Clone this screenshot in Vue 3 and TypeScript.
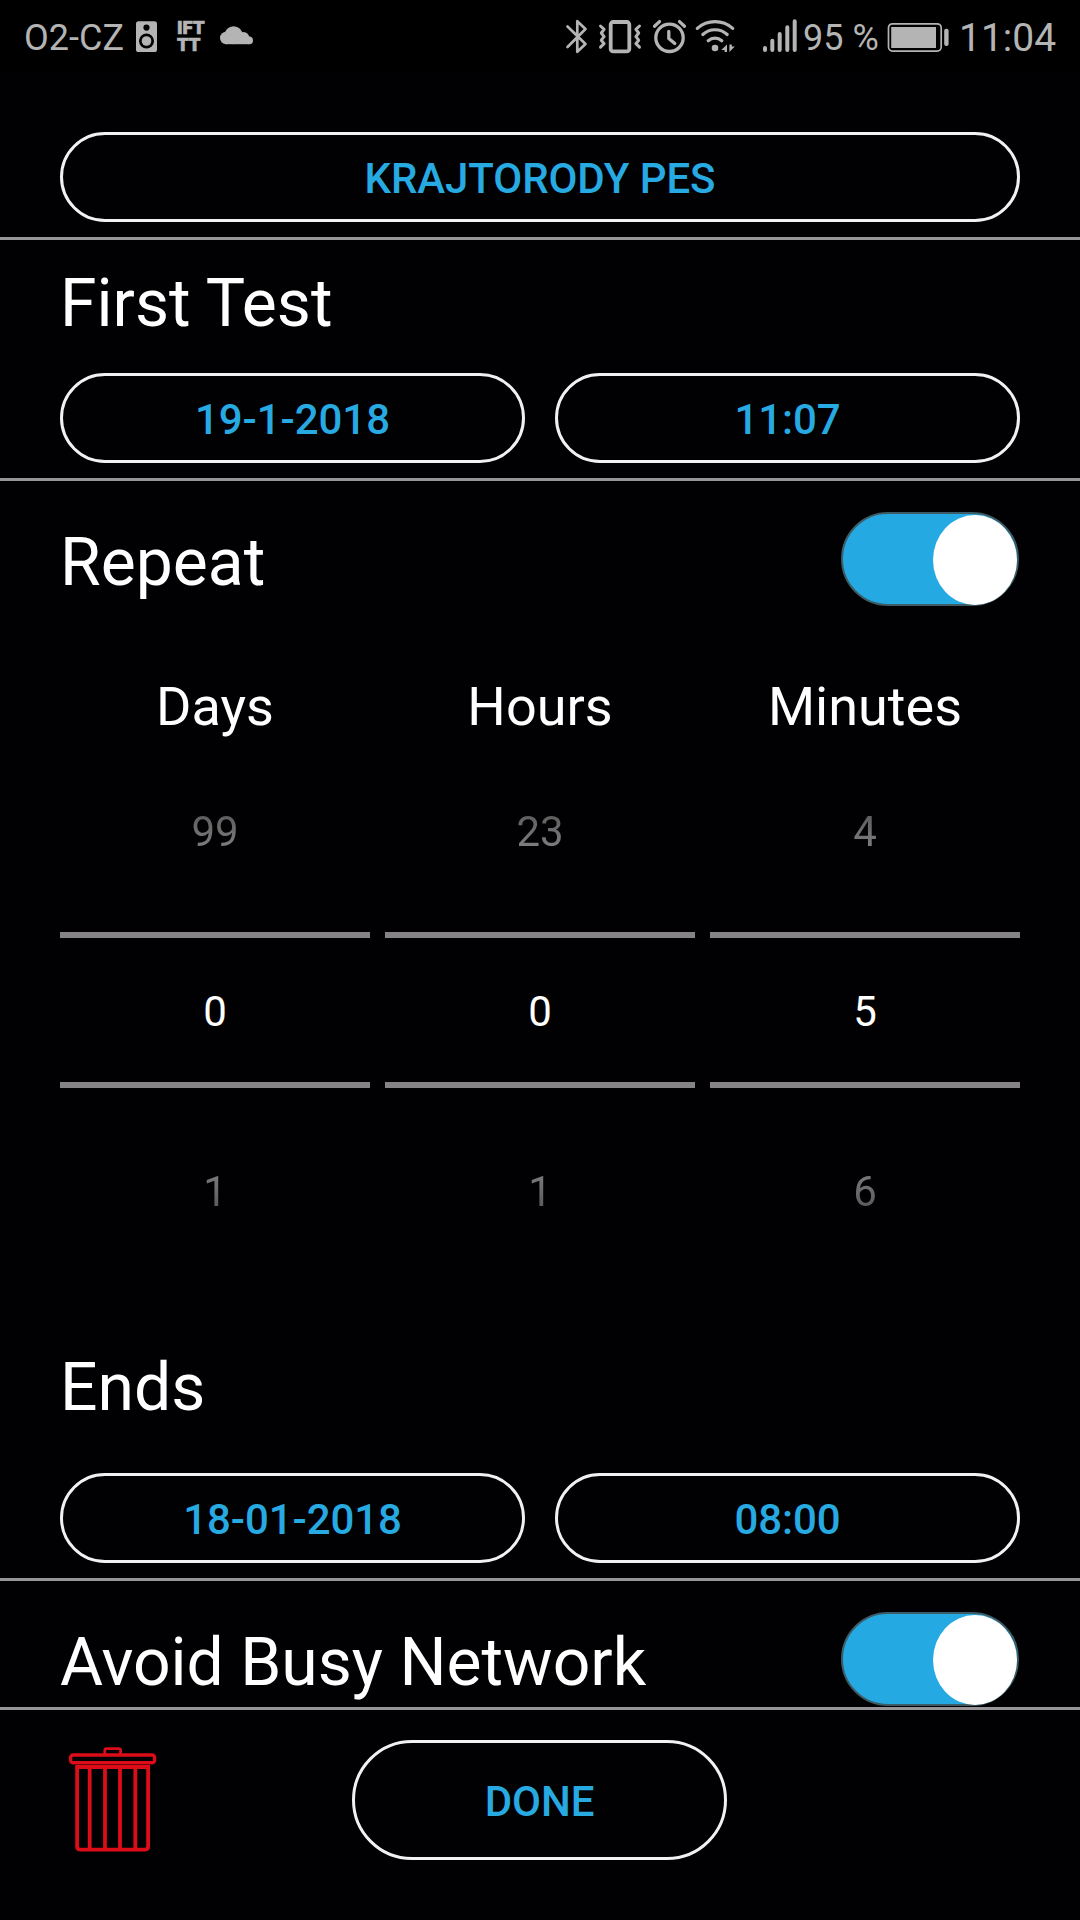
<script setup lang="ts">
interface Wheel {
  label: string
  prev: string
  current: string
  next: string
}

const testName = 'KRAJTORODY PES'
const start = { date: '19-1-2018', time: '11:07' }
const end = { date: '18-01-2018', time: '08:00' }
const iftttBadge = 'IFT\nTT'

const wheels: Wheel[] = [
  { label: 'Days', prev: '99', current: '0', next: '1' },
  { label: 'Hours', prev: '23', current: '0', next: '1' },
  { label: 'Minutes', prev: '4', current: '5', next: '6' },
]
</script>

<template>
  <div class="screen">
    <header class="status">
      <div class="status-left">
        <span class="carrier">O2-CZ</span>
        <svg viewBox="134 0 26 72" width="26" height="72">
          <rect x="136" y="21.3" width="21" height="30.7" rx="2.6" fill="#b4b4b4" />
          <circle cx="146.5" cy="27.6" r="3.1" fill="#000" />
          <circle cx="146.5" cy="41" r="7.5" fill="#000" />
          <circle cx="146.5" cy="41" r="4.8" fill="#b4b4b4" />
        </svg>
        <span class="ifttt">{{ iftttBadge }}</span>
        <svg viewBox="218 0 38 72" width="38" height="72">
          <g fill="#b4b4b4">
            <circle cx="226.2" cy="38" r="6.2" />
            <circle cx="233.6" cy="35.2" r="9" />
            <circle cx="243.4" cy="38" r="6" />
            <circle cx="249.2" cy="40.400" r="3.8" />
            <rect x="226" y="36" width="23.200" height="8.200" />
          </g>
        </svg>
      </div>
      <div class="status-right">
        <svg viewBox="560 0 32 72" width="32" height="72" class="line">
          <path d="M567.5 26.5 585.5 44 577.3 51.8V21.2L585.5 29 567.5 47" stroke-width="2.7" />
        </svg>
        <svg viewBox="592 0 56 72" width="56" height="72" class="line">
          <rect x="610.7" y="22" width="18.6" height="29.4" rx="2.5" stroke-width="3.8" />
          <path
            d="M600.5 26l3.6 3.4-2.8 3.6 2.8 3.6-2.8 3.6 2.8 3.5-3.6 3.5M639.5 26l-3.6 3.4 2.8 3.6-2.8 3.6 2.8 3.6-2.8 3.5 3.6 3.5"
            stroke-width="3"
          />
        </svg>
        <svg viewBox="648 0 42 72" width="42" height="72" class="line">
          <circle cx="669.5" cy="37.8" r="13.7" stroke-width="3.3" />
          <path d="M668.8 31.5v7l6 5" stroke-width="3.3" />
          <path d="M654.5 26.2l5-4.6M684.5 26.2l-5-4.6" stroke-width="3.3" />
        </svg>
        <svg viewBox="690 0 50 72" width="50" height="72" class="line">
          <path d="M697.3 28.4a26.5 26.5 0 0 1 35.4 0" stroke-width="3.2" />
          <path d="M702.8 34.5a18 18 0 0 1 24.4 0" stroke-width="3.2" />
          <path d="M708.2 40.7a10.5 10.5 0 0 1 13.6 0" stroke-width="3.2" />
          <circle cx="715" cy="48" r="3.3" class="solid" />
          <path d="M727 44.600V52h-2.400v-2h-3.300zM729.400 52V44.600h2.400v1.800h3z" class="solid" />
        </svg>
        <svg class="signal line" viewBox="755 0 47 72" width="47" height="72">
          <path
            d="M765 48v2M772.3 40.8V50M779.7 34V50M787.3 27.3V50M794.7 21.3V50"
            stroke-width="4"
          />
        </svg>
        <span class="percent">95 %</span>
        <svg viewBox="884 0 74 72" width="74" height="72">
          <rect
            x="888.5" y="23.8" width="52.7" height="27.3" rx="4"
            fill="none" stroke="#b4b4b4" stroke-width="1.7"
          />
          <rect x="891.2" y="27" width="44.8" height="21" fill="#b4b4b4" />
          <rect x="944.2" y="28.8" width="4.4" height="17.2" rx="2" fill="#b4b4b4" />
        </svg>
        <span class="clock">11:04</span>
      </div>
    </header>

    <section class="block name">
      <button class="pill">{{ testName }}</button>
    </section>

    <section class="block">
      <h2 class="title heading">First Test</h2>
      <div class="pair first">
        <button class="pill">{{ start.date }}</button>
        <button class="pill">{{ start.time }}</button>
      </div>
    </section>

    <section class="block">
      <div class="switch-row repeat">
        <h2 class="title">Repeat</h2>
        <div class="toggle"><i class="thumb"></i></div>
      </div>
      <div class="wheels">
        <div v-for="w in wheels" :key="w.label" class="wheel">
          <div class="wheel-label">{{ w.label }}</div>
          <div class="value prev">{{ w.prev }}</div>
          <div class="value current">{{ w.current }}</div>
          <div class="value next">{{ w.next }}</div>
        </div>
      </div>
      <h2 class="title ends">Ends</h2>
      <div class="pair last">
        <button class="pill">{{ end.date }}</button>
        <button class="pill">{{ end.time }}</button>
      </div>
    </section>

    <section class="block avoid">
      <div class="switch-row">
        <h2 class="title">Avoid Busy Network</h2>
        <div class="toggle"><i class="thumb"></i></div>
      </div>
    </section>

    <footer class="footer">
      <svg class="trash" viewBox="60 1745 110 110" width="110" height="110">
        <g fill="none" stroke="#dc0c18" stroke-width="3.4">
          <path d="M104.8 1754v-3.5q0-1.8 1.8-1.8h12.2q1.8 0 1.8 1.8v3.5" stroke-width="2.8" />
          <rect x="70.6" y="1755" width="84" height="7.8" rx="2.6" />
          <path d="M77.1 1767h71v79.6q0 3-3 3h-65q-3 0-3-3z" stroke-width="3.8" />
          <path d="M89.7 1767v82M105 1767v82M120 1767v82M135.3 1767v82" stroke-width="3.8" />
        </g>
      </svg>
      <button class="pill done">DONE</button>
    </footer>
  </div>
</template>

<style>
body {
  background: #000;
}
</style>

<style scoped>
.screen {
  width: 1080px;
  height: 1920px;
  display: flex;
  flex-direction: column;
  overflow: hidden;
  background: #010002;
  color: #fff;
  font-family: Roboto, 'Liberation Sans', sans-serif;
}

.status {
  display: flex;
  flex: none;
  height: 72px;
  background: #000;
  color: #b4b4b4;
  white-space: nowrap;
}

.status-left {
  display: flex;
  flex: none;
  box-sizing: border-box;
  width: 560px;
  padding-left: 24px;
}

.status-right {
  display: flex;
}

.status svg {
  flex: none;
  display: block;
}

.line {
  fill: none;
  stroke: #b4b4b4;
  stroke-linecap: round;
  stroke-linejoin: round;
}

.solid {
  fill: #b4b4b4;
  stroke: none;
}

.carrier {
  width: 110px;
  font-size: 36px;
  line-height: 76px;
}

.ifttt {
  width: 41px;
  margin-left: 17px;
  padding-top: 20px;
  font-size: 18.5px;
  font-weight: 900;
  line-height: 17px;
  white-space: pre;
  -webkit-text-stroke: 0.7px #b4b4b4;
}

.signal {
  margin-left: 15px;
}

.percent {
  width: 82px;
  padding-left: 1px;
  box-sizing: border-box;
  font-size: 36px;
  line-height: 77px;
}

.clock {
  padding-left: 1px;
  font-size: 39px;
  line-height: 76px;
}

.block {
  flex: none;
  padding: 0 60px 15px;
  border-bottom: 3px solid #979597;
}

.name {
  padding-top: 60px;
}

.title {
  margin: 0;
  font-size: 66px;
  font-weight: 400;
  line-height: 125px;
  white-space: nowrap;
}

.heading {
  padding-top: 1px;
}

.pill {
  display: block;
  box-sizing: border-box;
  width: 100%;
  height: 90px;
  padding: 0;
  border: 3px solid #f2f0f2;
  border-radius: 60px;
  background: transparent;
  color: #27a9e1;
  font-family: inherit;
  font-size: 42px;
  font-weight: 500;
  line-height: 88px;
  letter-spacing: -0.08px;
  text-align: center;
  white-space: nowrap;
}

.pair {
  display: grid;
  grid-template-columns: 1fr 1fr;
  gap: 30px;
}

.first {
  margin-top: 7px;
}

.last {
  margin-top: 23px;
}

.switch-row {
  display: flex;
  justify-content: space-between;
  align-items: flex-start;
}

.repeat .title {
  padding-top: 1px;
  line-height: 162px;
}

.toggle {
  display: flex;
  justify-content: flex-end;
  box-sizing: border-box;
  width: 178px;
  height: 94px;
  margin: 31px 1px 0 0;
  padding: 0.5px 0;
  border: 2px solid #3d5c66;
  border-radius: 48px;
  background: #25a9e2;
}

.thumb {
  width: 84px;
  height: 90px;
  border-radius: 50%;
  background: #fff;
}

.wheels {
  display: grid;
  grid-template-columns: repeat(3, 310px);
  gap: 15px;
  text-align: center;
}

.wheel-label {
  font-size: 54px;
  line-height: 125px;
}

.value {
  font-size: 42px;
  line-height: 125px;
}

.prev,
.next {
  color: transparent;
  -webkit-background-clip: text;
  background-clip: text;
}

.prev {
  background-image: linear-gradient(#5e5d5e 46px, #7e7d7e 78px);
}

.current {
  box-sizing: border-box;
  height: 156px;
  margin-top: 38px;
  padding-top: 3px;
  border: solid #858385;
  border-width: 6px 0;
  line-height: 141px;
}

.next {
  margin-top: 41px;
  background-image: linear-gradient(#7a797a 46px, #5c5b5c 78px);
}

.ends {
  margin-top: 71px;
}

.avoid {
  height: 126px;
  padding-bottom: 0;
}

.avoid .title {
  margin-top: 38px;
  line-height: 87px;
}

.footer {
  display: grid;
  grid-template-columns: 292px 375px;
  padding-left: 60px;
  align-items: start;
}

.trash {
  display: block;
  margin-top: 35px;
}

.done {
  height: 120px;
  margin-top: 30px;
  line-height: 118px;
}
</style>
